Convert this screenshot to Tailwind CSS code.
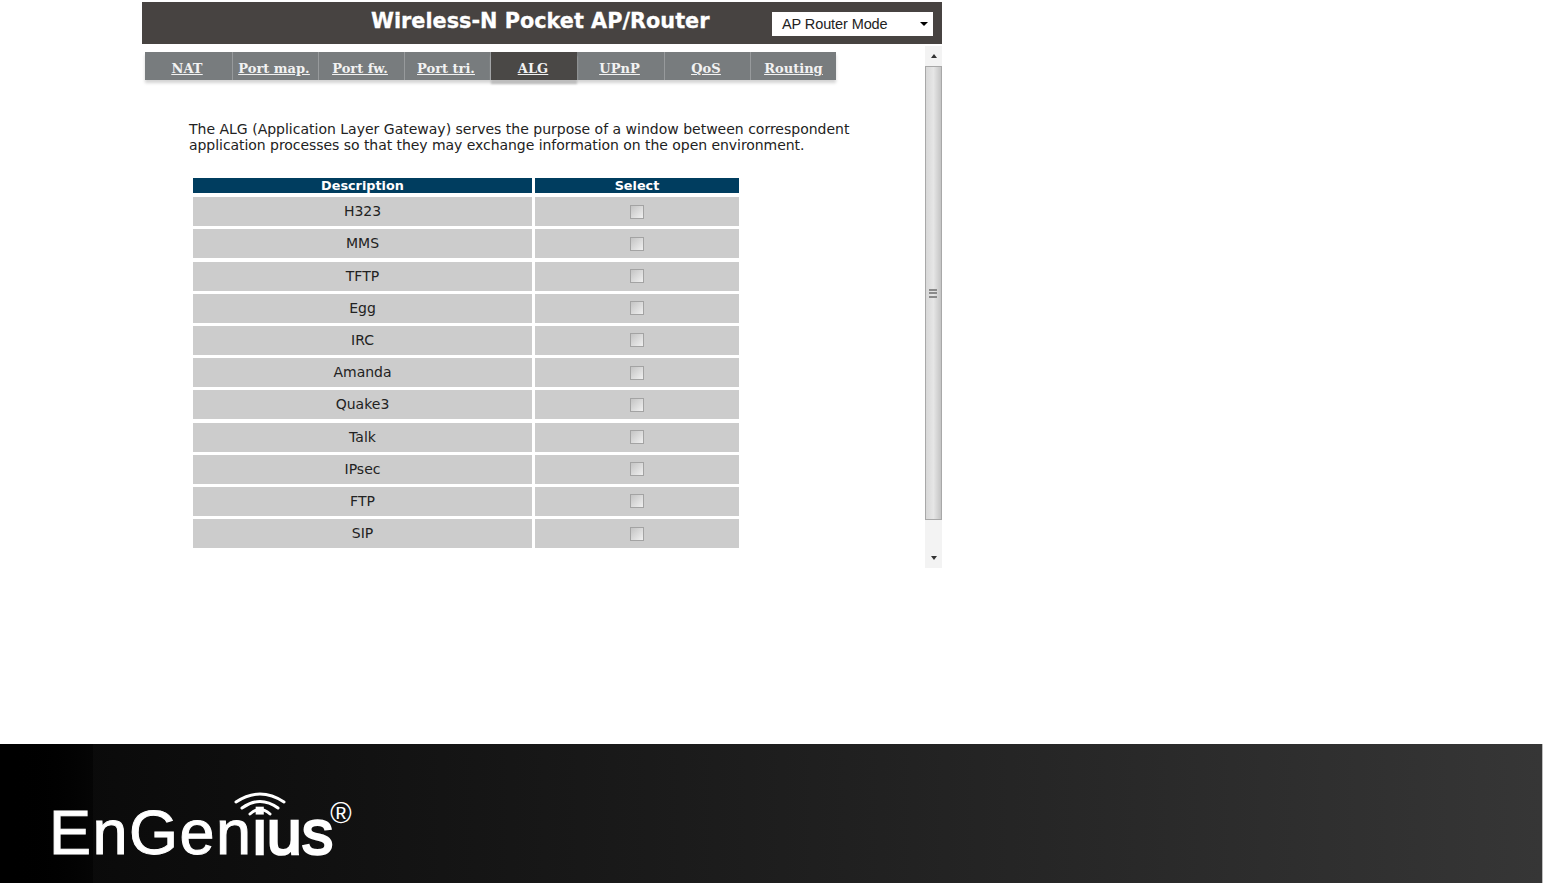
<!DOCTYPE html>
<html lang="en">
  <head>
    <meta charset="UTF-8" />
    <title>Wireless-N Pocket AP/Router - ALG</title>
    <script src="https://cdn.jsdelivr.net/npm/@tailwindcss/browser@4"></script>
  </head>
  <body class="bg-white h-[883px] overflow-hidden flex flex-col font-['DejaVu_Sans',sans-serif]">
    <!-- router window -->
    <div class="ml-[142px] mt-[2px] w-[800px]">
      <div class="h-[42px] bg-[#474341] flex items-center relative">
        <h1 class="ml-[229px] -mt-[3px] text-[20.8px] leading-none font-bold text-white [-webkit-text-stroke:0.3px_white]">Wireless-N Pocket AP/Router</h1>
        <div class="absolute left-[630px] top-[10px] w-[161px] h-[24px] bg-white flex items-center justify-between pl-[10px] pr-[5px] text-[#222] text-[14.5px] font-['Liberation_Sans',sans-serif]">
          <span class="tracking-[-0.1px] pt-[1px]">AP Router Mode</span>
          <span class="w-0 h-0 border-x-[4px] border-x-transparent border-t-[4px] border-t-black"></span>
        </div>
      </div>

      <div class="flex h-[524px]">
        <div class="flex-1 pl-[3px] pt-[8px]">
          <!-- tabs -->
          <nav class="flex w-[691px] h-[28px] bg-[#787c7e] shadow-[0_3px_3px_#d4d4d4] text-[13px] font-bold font-['DejaVu_Serif',serif] text-[#f2f2f2] underline">
            <a class="w-[88px] flex items-center justify-center pt-[6px] pr-[3px] border-r border-[#979a9c]">NAT</a>
            <a class="w-[86px] flex items-center justify-center pt-[6px] pr-[3px] border-r border-[#979a9c]">Port map.</a>
            <a class="w-[86px] flex items-center justify-center pt-[6px] pr-[3px] border-r border-[#979a9c]">Port fw.</a>
            <a class="w-[86px] flex items-center justify-center pt-[6px] pr-[3px] border-r border-[#979a9c]">Port tri.</a>
            <a class="w-[86px] flex items-center justify-center pt-[6px] pr-[2px] bg-[#4a4846] shadow-[0_4px_2px_#bdbdbd]">ALG</a>
            <a class="w-[88px] flex items-center justify-center pt-[6px] pr-[2px] border-r border-[#979a9c]">UPnP</a>
            <a class="w-[86px] flex items-center justify-center pt-[6px] pr-[3px] border-r border-[#979a9c]">QoS</a>
            <a class="w-[85px] flex items-center justify-center pt-[6px]">Routing</a>
          </nav>

          <p class="ml-[44px] mt-[42px] w-[680px] text-[14px] leading-[15.5px] text-[#222]">
            The ALG (Application Layer Gateway) serves the purpose of a window between correspondent<br />
            <span class="tracking-[-0.05px]">application processes so that they may exchange information on the open environment.</span>
          </p>

          <div class="ml-[48px] mt-[25px] w-[546px] grid grid-cols-[339px_204px] gap-x-[3px] gap-y-[3.2px] text-[14px] text-[#222] text-center">
            <div class="h-[15px] mb-[1px] bg-[#003d5f] text-white text-[12.8px] font-bold leading-[16px]">Description</div>
            <div class="h-[15px] mb-[1px] bg-[#003d5f] text-white text-[12.8px] font-bold leading-[16px]">Select</div>

            <div class="h-[29px] bg-[#cccccc] leading-[29px]">H323</div>
            <div class="h-[29px] bg-[#cccccc] flex items-center justify-center"><input type="checkbox" class="appearance-none w-[14px] h-[14px] border border-[#a3a3a3] bg-linear-to-br from-[#c4c4c4] to-[#f0f0f0]" /></div>
            <div class="h-[29px] bg-[#cccccc] leading-[29px]">MMS</div>
            <div class="h-[29px] bg-[#cccccc] flex items-center justify-center"><input type="checkbox" class="appearance-none w-[14px] h-[14px] border border-[#a3a3a3] bg-linear-to-br from-[#c4c4c4] to-[#f0f0f0]" /></div>
            <div class="h-[29px] bg-[#cccccc] leading-[29px]">TFTP</div>
            <div class="h-[29px] bg-[#cccccc] flex items-center justify-center"><input type="checkbox" class="appearance-none w-[14px] h-[14px] border border-[#a3a3a3] bg-linear-to-br from-[#c4c4c4] to-[#f0f0f0]" /></div>
            <div class="h-[29px] bg-[#cccccc] leading-[29px]">Egg</div>
            <div class="h-[29px] bg-[#cccccc] flex items-center justify-center"><input type="checkbox" class="appearance-none w-[14px] h-[14px] border border-[#a3a3a3] bg-linear-to-br from-[#c4c4c4] to-[#f0f0f0]" /></div>
            <div class="h-[29px] bg-[#cccccc] leading-[29px]">IRC</div>
            <div class="h-[29px] bg-[#cccccc] flex items-center justify-center"><input type="checkbox" class="appearance-none w-[14px] h-[14px] border border-[#a3a3a3] bg-linear-to-br from-[#c4c4c4] to-[#f0f0f0]" /></div>
            <div class="h-[29px] bg-[#cccccc] leading-[29px]">Amanda</div>
            <div class="h-[29px] bg-[#cccccc] flex items-center justify-center"><input type="checkbox" class="appearance-none w-[14px] h-[14px] border border-[#a3a3a3] bg-linear-to-br from-[#c4c4c4] to-[#f0f0f0]" /></div>
            <div class="h-[29px] bg-[#cccccc] leading-[29px]">Quake3</div>
            <div class="h-[29px] bg-[#cccccc] flex items-center justify-center"><input type="checkbox" class="appearance-none w-[14px] h-[14px] border border-[#a3a3a3] bg-linear-to-br from-[#c4c4c4] to-[#f0f0f0]" /></div>
            <div class="h-[29px] bg-[#cccccc] leading-[29px]">Talk</div>
            <div class="h-[29px] bg-[#cccccc] flex items-center justify-center"><input type="checkbox" class="appearance-none w-[14px] h-[14px] border border-[#a3a3a3] bg-linear-to-br from-[#c4c4c4] to-[#f0f0f0]" /></div>
            <div class="h-[29px] bg-[#cccccc] leading-[29px]">IPsec</div>
            <div class="h-[29px] bg-[#cccccc] flex items-center justify-center"><input type="checkbox" class="appearance-none w-[14px] h-[14px] border border-[#a3a3a3] bg-linear-to-br from-[#c4c4c4] to-[#f0f0f0]" /></div>
            <div class="h-[29px] bg-[#cccccc] leading-[29px]">FTP</div>
            <div class="h-[29px] bg-[#cccccc] flex items-center justify-center"><input type="checkbox" class="appearance-none w-[14px] h-[14px] border border-[#a3a3a3] bg-linear-to-br from-[#c4c4c4] to-[#f0f0f0]" /></div>
            <div class="h-[29px] bg-[#cccccc] leading-[29px]">SIP</div>
            <div class="h-[29px] bg-[#cccccc] flex items-center justify-center"><input type="checkbox" class="appearance-none w-[14px] h-[14px] border border-[#a3a3a3] bg-linear-to-br from-[#c4c4c4] to-[#f0f0f0]" /></div>
          </div>
        </div>

        <!-- scrollbar -->
        <div class="w-[17px] mt-[2px] bg-[#f3f3f3] flex flex-col items-center">
          <div class="h-[20px] w-full flex items-center justify-center">
            <span class="w-0 h-0 border-x-[3.5px] border-x-transparent border-b-[4px] border-b-[#333]"></span>
          </div>
          <div class="h-[454px] w-full bg-linear-to-r from-[#d8d8d8] via-[#e6e6e6] to-[#c4c4c4] border border-[#a8a8a8] flex flex-col items-center justify-center gap-[1.5px] pr-[1px]">
            <span class="w-[8px] h-[2px] bg-[#8a8a8a]"></span>
            <span class="w-[8px] h-[2px] bg-[#8a8a8a]"></span>
            <span class="w-[8px] h-[2px] bg-[#8a8a8a]"></span>
          </div>
          <div class="flex-1 w-full flex items-center justify-center pt-[27px]">
            <span class="w-0 h-0 border-x-[3.5px] border-x-transparent border-t-[4px] border-t-[#333]"></span>
          </div>
        </div>
      </div>
    </div>

    <!-- footer -->
    <footer class="mt-auto h-[139px] w-[1543px] flex border-r border-[#bdbdbd] bg-linear-to-r from-[#080808] to-[#363636]">
      <div class="w-[93px] h-full bg-linear-to-r from-black to-[#050505] shrink-0"></div>
      <div class="relative -ml-[44px] mt-[53px] h-[70px] flex items-start text-white font-['Liberation_Sans',sans-serif] text-[63px] leading-[70px] tracking-[1.5px]">
        <span class="[-webkit-text-stroke:1px_white]">EnGen<span class="tracking-[0px] [-webkit-text-stroke:2.5px_white]">ius</span></span>
        <span class="text-[29px] leading-[32px] -ml-[3px] tracking-normal">®</span>
        <svg class="absolute left-[184px] -top-[6px]" width="54" height="26" viewBox="0 0 54 26" fill="none" stroke="white" stroke-linecap="round">
          <path d="M3 11 Q27 -5 51 11" stroke-width="3" />
          <path d="M9 17 Q27 4 45 17" stroke-width="3" />
          <path d="M17 23 Q27 14 37 23" stroke-width="3" />
        </svg>
      </div>
    </footer>
  </body>
</html>
